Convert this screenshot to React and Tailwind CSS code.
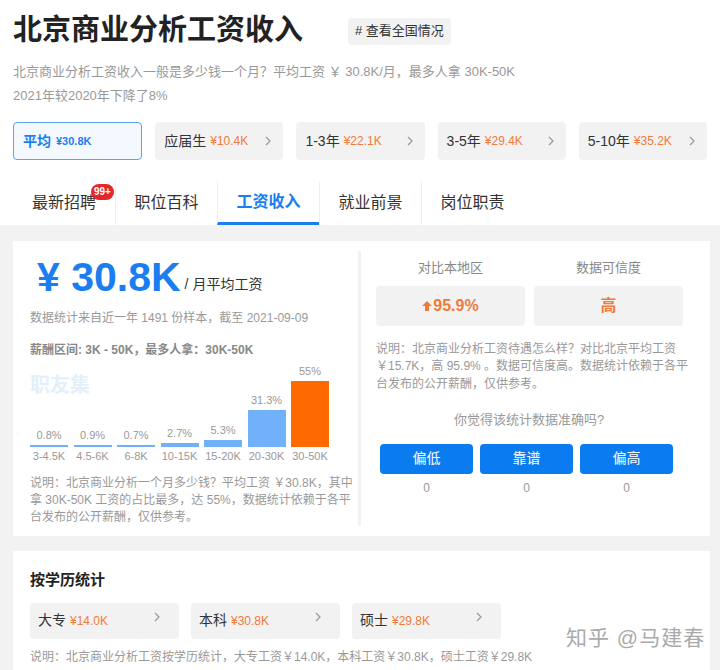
import React from 'react';

const levels = [
  { name: '应届生', val: '¥10.4K' },
  { name: '1-3年', val: '¥22.1K' },
  { name: '3-5年', val: '¥29.4K' },
  { name: '5-10年', val: '¥35.2K' },
];

const tabs = ['最新招聘', '职位百科', '工资收入', '就业前景', '岗位职责'];

const bars = [
  { label: '3-4.5K', pct: '0.8%', h: 2 },
  { label: '4.5-6K', pct: '0.9%', h: 2 },
  { label: '6-8K', pct: '0.7%', h: 2 },
  { label: '10-15K', pct: '2.7%', h: 4 },
  { label: '15-20K', pct: '5.3%', h: 7 },
  { label: '20-30K', pct: '31.3%', h: 37 },
  { label: '30-50K', pct: '55%', h: 66, top: true },
];

const edu = [
  { name: '大专', val: '¥14.0K' },
  { name: '本科', val: '¥30.8K' },
  { name: '硕士', val: '¥29.8K' },
];

const Chevron = () => (
  <svg width="8" height="12" viewBox="0 0 8 12" className="shrink-0">
    <path d="M2 2l4 4-4 4" fill="none" stroke="#999" strokeWidth="1.2" />
  </svg>
);

export default function App() {
  return (
    <div
      className="w-[720px] h-[670px] overflow-hidden bg-white relative"
      style={{ fontFamily: '"Liberation Sans", "Noto Sans CJK SC", sans-serif' }}
    >
      {/* header */}
      <div className="px-[13px] pt-[12px]">
        <div className="flex items-center">
          <h1 className="text-[29px] leading-[36px] font-bold text-[#222]">北京商业分析工资收入</h1>
          <span className="ml-[45px] mt-[2px] h-[27px] px-[7px] flex items-center rounded bg-[#f2f2f2] text-[13px] text-[#333]">
            # 查看全国情况
          </span>
        </div>
        <p className="mt-[12px] text-[13px] leading-[24px] text-[#999]">
          北京商业分析工资收入一般是多少钱一个月？平均工资 ￥ 30.8K/月，最多人拿 30K-50K
          <br />
          2021年较2020年下降了8%
        </p>

        {/* levels */}
        <div className="mt-[14px] flex gap-[13px]">
          <div className="w-[130px] h-[38px] rounded border border-[#5ba4ef] bg-[#f4f9ff] flex items-center px-[9px] gap-[5px]">
            <span className="text-[14px] font-bold text-[#1a7ef0]">平均</span>
            <span className="text-[11px] font-bold text-[#1a7ef0]">¥30.8K</span>
          </div>
          {levels.map((l) => (
            <div key={l.name} className="w-[129px] h-[38px] rounded bg-[#f2f2f2] flex items-center px-[9px]">
              <span className="text-[14px] text-[#333]">{l.name}</span>
              <span className="ml-[4px] text-[12px] text-[#f07a3a]">{l.val}</span>
              <span className="ml-auto mr-[2px]"><Chevron /></span>
            </div>
          ))}
        </div>

        {/* tabs */}
        <div className="mt-[21px] flex h-[44px]">
          {tabs.map((t, i) => (
            <div
              key={t}
              className={`relative w-[102px] flex items-center justify-center text-[16px] ${
                i === 2 ? 'text-[#1a7ef0] font-bold border-b-[3px] border-[#1a7ef0]' : 'text-[#333]'
              } ${i > 0 ? 'border-l border-l-[#eee]' : ''}`}
            >
              {t}
              {i === 0 && (
                <span className="absolute left-[78px] top-[3px] h-[16px] px-[3px] rounded-full bg-[#e5262b] text-white text-[10px] font-bold leading-[16px]">
                  99+
                </span>
              )}
            </div>
          ))}
        </div>
      </div>

      {/* gray area */}
      <div className="bg-[#f2f2f2] px-[13px] pt-[16px] pb-[20px]">
        <div className="bg-white flex w-[697px] h-[295px]">
          {/* left */}
          <div className="w-[345px] pl-[17px] pr-[4px] pt-[14px]">
            <div className="flex items-end pl-[7px]">
              <span className="text-[41px] leading-[44px] font-bold text-[#1a7ef0]">¥ 30.8K</span>
              <span className="ml-[4px] mb-[4px] text-[14px] text-[#333]">/ 月平均工资</span>
            </div>
            <p className="mt-[10px] text-[12px] text-[#999]">数据统计来自近一年 1491 份样本，截至 2021-09-09</p>
            <p className="mt-[14px] text-[12px] font-bold text-[#888]">薪酬区间: 3K - 50K，最多人拿：30K-50K</p>

            <div className="relative mt-[9px] h-[95px]">
              <span className="absolute left-[0px] top-[2px] text-[20px] font-bold text-[#e3f0fc]">职友集</span>
              <div className="absolute left-0 bottom-0 flex items-end gap-[5.5px]">
                {bars.map((b) => (
                  <div key={b.label} className="w-[38px] flex flex-col items-center">
                    <span className="text-[11px] text-[#999] leading-[14px] mb-[3px]">{b.pct}</span>
                    <div
                      className={`w-full ${b.top ? 'bg-[#ff6a00]' : 'bg-[#70b1fa]'}`}
                      style={{ height: b.h }}
                    />
                    <span className="mt-[2px] text-[11px] text-[#999] leading-[14px] whitespace-nowrap">{b.label}</span>
                  </div>
                ))}
              </div>
            </div>

            <p className="mt-[12px] text-[12px] leading-[17px] text-[#999] whitespace-nowrap">
              说明：北京商业分析一个月多少钱？平均工资 ￥30.8K，其中
              <br />
              拿 30K-50K 工资的占比最多，达 55%，数据统计依赖于各平
              <br />
              台发布的公开薪酬，仅供参考。
            </p>
          </div>

          {/* divider */}
          <div className="w-[3px] my-[10px] bg-[#f2f2f2]" />

          {/* right */}
          <div className="flex-1 pl-[15px] pr-[20px] pt-[17px]">
            <div className="flex gap-[9px]">
              <div className="w-[149px] flex flex-col items-center">
                <span className="text-[13px] text-[#888]">对比本地区</span>
                <div className="mt-[8px] w-full h-[40px] rounded bg-[#f2f2f2] flex items-center justify-center text-[16px] font-bold text-[#f07a3a]">
                  <svg width="10" height="10" viewBox="0 0 10 10" className="mr-[1px]">
                    <path d="M5 0L10 5H7V10H3V5H0Z" fill="#f07a3a" />
                  </svg>
                  95.9%
                </div>
              </div>
              <div className="w-[149px] flex flex-col items-center">
                <span className="text-[13px] text-[#888]">数据可信度</span>
                <div className="mt-[8px] w-full h-[40px] rounded bg-[#f2f2f2] flex items-center justify-center text-[16px] font-bold text-[#f07a3a]">
                  高
                </div>
              </div>
            </div>
            <p className="mt-[15px] text-[12px] leading-[17.5px] text-[#999] whitespace-nowrap">
              说明：北京商业分析工资待遇怎么样？对比北京平均工资
              <br />
              ￥15.7K，高 95.9% 。数据可信度高。数据统计依赖于各平
              <br />
              台发布的公开薪酬，仅供参考。
            </p>
            <p className="mt-[17px] pr-[8px] text-center text-[13px] text-[#999]">你觉得该统计数据准确吗?</p>
            <div className="mt-[14px] flex gap-[7px] pl-[4px]">
              {['偏低', '靠谱', '偏高'].map((t) => (
                <div key={t} className="w-[93px] flex flex-col items-center">
                  <div className="w-full h-[30px] rounded bg-[#0b7cf0] text-white text-[14px] flex items-center justify-center">
                    {t}
                  </div>
                  <span className="mt-[5px] text-[12px] text-[#999]">0</span>
                </div>
              ))}
            </div>
          </div>
        </div>

        {/* education */}
        <div className="mt-[15px] bg-white w-[697px] h-[120px] px-[17px] pt-[18px]">
          <h2 className="text-[15px] font-bold text-[#222]">按学历统计</h2>
          <div className="mt-[11px] flex gap-[12px]">
            {edu.map((e) => (
              <div key={e.name} className="w-[149px] h-[36px] rounded bg-[#f2f2f2] flex items-center px-[8px]">
                <span className="text-[14px] text-[#333]">{e.name}</span>
                <span className="ml-[4px] text-[12px] text-[#f07a3a]">{e.val}</span>
                <span className="ml-auto mr-[10px] -mt-[8px]"><Chevron /></span>
              </div>
            ))}
          </div>
          <p className="mt-[9px] text-[12px] text-[#999]">
            说明：北京商业分析工资按学历统计，大专工资￥14.0K，本科工资￥30.8K，硕士工资￥29.8K
          </p>
        </div>
      </div>

      {/* watermark */}
      <span className="absolute left-[566px] top-[622px] text-[21px] text-[#aaa] tracking-[1px]">知乎 @马建春</span>
    </div>
  );
}
